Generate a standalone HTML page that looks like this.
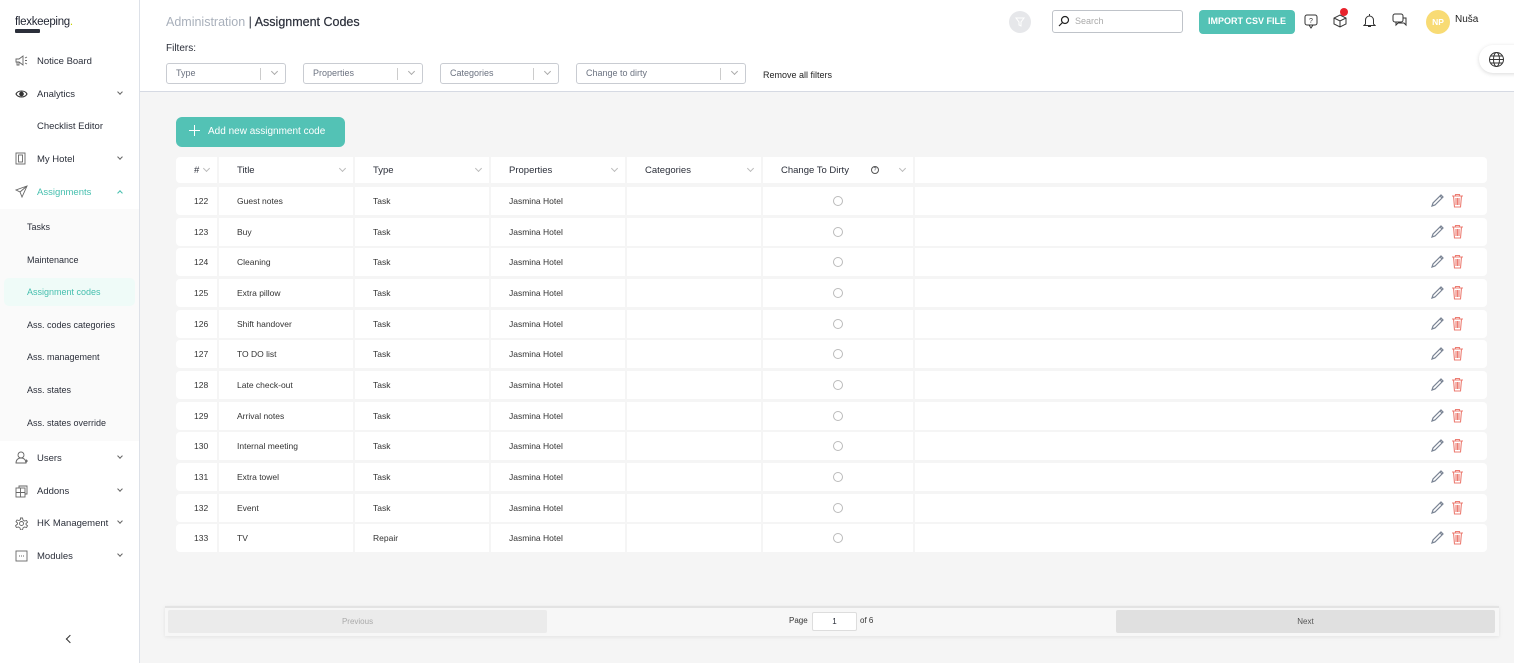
<!DOCTYPE html>
<html><head><meta charset="utf-8"><style>
*{box-sizing:border-box;margin:0;padding:0}
body{width:1514px;height:663px;overflow:hidden;font-family:"Liberation Sans",sans-serif;background:#f5f5f5;position:relative;color:#2b2f3a}
.a{position:absolute}
#side{left:0;top:0;width:140px;height:663px;background:#fff;border-right:1px solid #dde1e8}
.si{position:absolute;left:37px;font-size:9.5px;color:#2b2f3a}
.sub{position:absolute;left:27px;font-size:9px;color:#2b2f3a}
.chev{position:absolute;left:118px;width:4px;height:4px;border-right:1px solid #666;border-bottom:1px solid #666;transform:rotate(45deg)}
.ic{position:absolute;left:15px}
#hdr{left:140px;top:0;width:1374px;height:92px;background:#fff;border-bottom:1px solid #d6dae3}
.sel{position:absolute;top:63px;height:21px;border:1px solid #c9ccd2;border-radius:3px;background:#fff;font-size:9px;color:#6b7280;padding:4px 9px}
.sel:after{content:"";position:absolute;right:24px;top:4px;width:1px;height:12px;background:#ccc}
.sel i{position:absolute;right:8px;top:5px;width:5px;height:5px;border-right:1px solid #aaa;border-bottom:1px solid #aaa;transform:rotate(45deg)}
.row{position:absolute;left:176px;width:1311px;height:28px}
.c{position:absolute;top:0;height:100%;background:#fff;font-size:8.5px;color:#333;display:flex;align-items:center}
.h .c{font-size:9.5px;color:#2b2f3a;border-radius:0}
.hc:after{content:"";position:absolute;right:8px;top:9px;width:4px;height:4px;border-right:1px solid #bbb;border-bottom:1px solid #bbb;transform:rotate(45deg)}
.rad{width:10px;height:10px;border:1px solid #bbb;border-radius:50%;margin-left:70px}
</style></head><body>
<div id="side" class="a">
<div class="a" style="left:15px;top:16px;font-size:11.5px;letter-spacing:-0.3px;color:#1f2330">flexkeeping<span style="color:#c8d400">.</span></div>
<div class="a" style="left:15px;top:29px;width:25px;height:4px;background:#2b2f3a;border-radius:1px"></div>
<svg class="ic" style="top:55px" width="13" height="12" viewBox="0 0 13 12" fill="none" stroke="#666" stroke-width="0.9"><path d="M1 4h3l4-3v9L4 7H1zM2 7v3h2V7M10 3l2-1M10 5.5h2M10 8l2 1"/></svg>
<div class="si" style="top:56px">Notice Board</div>
<svg class="ic" style="top:89px" width="13" height="10" viewBox="0 0 13 10" fill="none" stroke="#333" stroke-width="1.1"><path d="M1 5C3 1 10 1 12 5C10 9 3 9 1 5z"/><circle cx="6.5" cy="5" r="1.8" fill="#333"/></svg>
<div class="si" style="top:89px">Analytics</div><div class="chev" style="top:90px"></div>
<div class="si" style="top:121px">Checklist Editor</div>
<svg class="ic" style="top:152px" width="11" height="13" viewBox="0 0 11 13" fill="none" stroke="#666" stroke-width="0.9"><rect x="1" y="1" width="9" height="11"/><rect x="3.5" y="3" width="4" height="7"/></svg>
<div class="si" style="top:154px">My Hotel</div><div class="chev" style="top:155px"></div>
<svg class="ic" style="top:185px" width="13" height="13" viewBox="0 0 13 13" fill="none" stroke="#666" stroke-width="0.9"><path d="M12 1L1 5l4 2 2 5zM5 7l7-6"/></svg>
<div class="si" style="top:187px;color:#45bfae">Assignments</div><div class="chev" style="top:191px;border-color:#45bfae;transform:rotate(-135deg)"></div>
<div class="a" style="left:0;top:209px;width:139px;height:232px;background:#fafafa"></div>
<div class="a" style="left:4px;top:278px;width:131px;height:28px;background:#effbf8;border-radius:5px"></div>
<div class="sub" style="top:222px">Tasks</div>
<div class="sub" style="top:255px">Maintenance</div>
<div class="sub" style="top:287px;color:#45bfae">Assignment codes</div>
<div class="sub" style="top:320px">Ass. codes categories</div>
<div class="sub" style="top:352px">Ass. management</div>
<div class="sub" style="top:385px">Ass. states</div>
<div class="sub" style="top:418px">Ass. states override</div>
<svg class="ic" style="top:451px" width="13" height="13" viewBox="0 0 13 13" fill="none" stroke="#666" stroke-width="0.9"><circle cx="6" cy="4" r="3"/><path d="M1 12c0-3 2-5 5-5s5 2 5 5zM10 10h3M11.5 8.5v3"/></svg>
<div class="si" style="top:453px">Users</div><div class="chev" style="top:454px"></div>
<svg class="ic" style="top:485px" width="13" height="13" viewBox="0 0 13 13" fill="none" stroke="#666" stroke-width="0.9"><rect x="1" y="3" width="9" height="9"/><path d="M5.5 3v9M1 7.5h9M4 3V1h8v8h-2"/></svg>
<div class="si" style="top:486px">Addons</div><div class="chev" style="top:487px"></div>
<svg class="ic" style="top:517px" width="13" height="13" viewBox="0 0 13 13" fill="none" stroke="#666" stroke-width="0.9"><circle cx="6.5" cy="6.5" r="2"/><path d="M5.5 1h2l.5 2 1.5 1 2-.5 1 1.7-1.5 1.3v1l1.5 1.3-1 1.7-2-.5-1.5 1-.5 2h-2l-.5-2-1.5-1-2 .5-1-1.7L2.5 7V6L1 4.7l1-1.7 2 .5 1.5-1z"/></svg>
<div class="si" style="top:518px">HK Management</div><div class="chev" style="top:519px"></div>
<svg class="ic" style="top:550px" width="13" height="12" viewBox="0 0 13 12" fill="none" stroke="#666" stroke-width="0.9"><rect x="1" y="1" width="11" height="10"/><path d="M4 6h1M6 6h1M8 6h1"/></svg>
<div class="si" style="top:551px">Modules</div><div class="chev" style="top:552px"></div>
<div class="a" style="left:67px;top:636px;width:6px;height:6px;border-left:1.5px solid #333;border-bottom:1.5px solid #333;transform:rotate(45deg)"></div>
</div>

<div id="hdr" class="a">
<div class="a" style="left:26px;top:15px;font-size:12.5px;color:#2b2f3a"><span style="color:#a9b0bb">Administration</span> | <span style="-webkit-text-stroke:0.2px #2b2f3a">Assignment Codes</span></div>
<div class="a" style="left:26px;top:43px;font-size:10px;color:#2b2f3a">Filters:</div>
<div class="sel" style="left:26px;width:120px">Type<i></i></div>
<div class="sel" style="left:163px;width:120px">Properties<i></i></div>
<div class="sel" style="left:300px;width:119px">Categories<i></i></div>
<div class="sel" style="left:436px;width:170px">Change to dirty<i></i></div>
<div class="a" style="left:623px;top:70px;font-size:9px;color:#222">Remove all filters</div>
<div class="a" style="left:869px;top:11px;width:22px;height:22px;border-radius:50%;background:#e6e7ea"></div>
<svg class="a" style="left:875px;top:17px" width="10" height="10" viewBox="0 0 10 10" fill="none" stroke="#fff"><path d="M1 1h8L6 5v4L4 8V5z"/></svg>
<div class="a" style="left:912px;top:10px;width:131px;height:23px;border:1px solid #bfc3c9;border-radius:3px;font-size:9px;color:#aaa;padding:5px 0 0 22px">Search</div>
<svg class="a" style="left:918px;top:15px" width="12" height="12" viewBox="0 0 12 12" fill="none" stroke="#222" stroke-width="1.2"><circle cx="7" cy="5" r="3.5"/><path d="M4.5 7.5L1 11"/></svg>
<div class="a" style="left:1059px;top:10px;width:96px;height:24px;background:#53c2b5;border-radius:4px;color:#fff;font-size:9px;font-weight:bold;text-align:center;line-height:22px">IMPORT CSV FILE</div>
<svg class="a" style="left:1164px;top:14px" width="14" height="15" viewBox="0 0 14 15" fill="none" stroke="#333"><rect x="1" y="1" width="12" height="10" rx="2"/><path d="M5 11l2 3 2-3"/><text x="7" y="9" font-size="7" text-anchor="middle" fill="#333" stroke="none" font-family="Liberation Sans">?</text></svg>
<svg class="a" style="left:1193px;top:13px" width="14" height="15" viewBox="0 0 14 15" fill="none" stroke="#333"><path d="M7 2l6 3v6l-6 3-6-3V5zM1 5l6 3 6-3M7 8v6"/></svg>
<div class="a" style="left:1200px;top:8px;width:8px;height:8px;background:#e8232c;border-radius:50%"></div>
<svg class="a" style="left:1223px;top:13px" width="13" height="15" viewBox="0 0 13 15" fill="none" stroke="#333"><path d="M6.5 1v1.5M2.5 11V7a4 4 0 0 1 8 0v4l1.5 1.5H1zM5 13.5h3"/></svg>
<svg class="a" style="left:1252px;top:13px" width="15" height="14" viewBox="0 0 15 14" fill="none" stroke="#333"><rect x="1" y="1" width="10" height="8" rx="2"/><path d="M4 9v3l2-2M6 10h6l2 2V5h-3"/></svg>
<div class="a" style="left:1286px;top:10px;width:24px;height:24px;border-radius:50%;background:#f8db74;color:#fff;font-size:8.5px;font-weight:bold;text-align:center;line-height:24px">NP</div>
<div class="a" style="left:1315px;top:14px;font-size:10px;color:#222">Nuša</div>
<div class="a" style="left:1339px;top:45px;width:40px;height:28px;background:#fff;border-radius:14px 0 0 14px;box-shadow:0 1px 4px rgba(0,0,0,.15)"></div>
<svg class="a" style="left:1348px;top:51px" width="17" height="17" viewBox="0 0 17 17" fill="none" stroke="#333"><circle cx="8.5" cy="8.5" r="7"/><ellipse cx="8.5" cy="8.5" rx="3" ry="7"/><path d="M1.5 8.5h14M2.5 5h12M2.5 12h12"/></svg>
</div>

<div class="a" style="left:176px;top:117px;width:169px;height:30px;background:#53c2b5;border-radius:6px;color:#fff;font-size:10px;line-height:29px;padding-left:32px">Add new assignment code</div>
<div class="a" style="left:189px;top:125px;width:11px;height:11px"><div class="a" style="left:5px;top:0;width:1.4px;height:11px;background:#fff"></div><div class="a" style="left:0;top:5px;width:11px;height:1.4px;background:#fff"></div></div>

<div class="row h" style="top:157px;height:26px">
<div class="c hc" style="left:0;width:41px;padding-left:18px;border-radius:4px 0 0 4px">#</div>
<div class="c hc" style="left:43px;width:134px;padding-left:18px">Title</div>
<div class="c hc" style="left:179px;width:134px;padding-left:18px">Type</div>
<div class="c hc" style="left:315px;width:134px;padding-left:18px">Properties</div>
<div class="c hc" style="left:451px;width:134px;padding-left:18px">Categories</div>
<div class="c hc" style="left:587px;width:150px;padding-left:18px">Change To Dirty<span style="margin-left:22px;width:8px;height:8px;border:1px solid #555;border-radius:50%;font-size:5px;text-align:center;line-height:6px">?</span></div>
<div class="c" style="left:739px;width:572px;border-radius:0 4px 4px 0"></div>
</div>

<div id="rows"></div>
<script>
var d=[["122","Guest notes","Task"],["123","Buy","Task"],["124","Cleaning","Task"],["125","Extra pillow","Task"],["126","Shift handover","Task"],["127","TO DO list","Task"],["128","Late check-out","Task"],["129","Arrival notes","Task"],["130","Internal meeting","Task"],["131","Extra towel","Task"],["132","Event","Task"],["133","TV","Repair"]];
var h="";d.forEach(function(r,i){var t=187+i*30.65;
h+='<div class="row" style="top:'+t+'px"><div class="c" style="left:0;width:41px;padding-left:18px;border-radius:4px 0 0 4px">'+r[0]+'</div><div class="c" style="left:43px;width:134px;padding-left:18px">'+r[1]+'</div><div class="c" style="left:179px;width:134px;padding-left:18px">'+r[2]+'</div><div class="c" style="left:315px;width:134px;padding-left:18px">Jasmina Hotel</div><div class="c" style="left:451px;width:134px"></div><div class="c" style="left:587px;width:150px"><div class="rad"></div></div><div class="c" style="left:739px;width:572px;border-radius:0 4px 4px 0"><svg style="position:absolute;left:515px;top:7px" width="14" height="14" viewBox="0 0 14 14" fill="none" stroke="#7a8494" stroke-width="1.2"><path d="M2 12l1-3 8-8 2 2-8 8zM10 2l2 2"/></svg><svg style="position:absolute;left:536px;top:6px" width="13" height="15" viewBox="0 0 13 15" fill="none" stroke="#ec7d73" stroke-width="1.1"><path d="M1 3h11M4.5 3V1.5h4V3M2.5 3l1 11h6l1-11M5 5v7M6.5 5v7M8 5v7"/></svg></div></div>';});
document.getElementById("rows").innerHTML=h;
</script>

<div class="a" style="left:165px;top:606px;width:1334px;height:30px;background:#f7f7f7;border-top:2px solid #e3e3e3;box-shadow:0 1px 4px rgba(0,0,0,.08)"></div>
<div class="a" style="left:168px;top:610px;width:379px;height:23px;background:#ebebeb;border-radius:2px;font-size:8px;color:#aaa;text-align:center;line-height:23px">Previous</div>
<div class="a" style="left:1116px;top:610px;width:379px;height:23px;background:#e0e0e0;border-radius:2px;font-size:8px;color:#555;text-align:center;line-height:23px">Next</div>
<div class="a" style="left:789px;top:616px;font-size:8px;color:#333">Page</div>
<div class="a" style="left:812px;top:612px;width:45px;height:19px;background:#fff;border:1px solid #ddd;border-radius:2px;font-size:8px;text-align:center;line-height:17px">1</div>
<div class="a" style="left:860px;top:616px;font-size:8px;color:#333">of 6</div>
</body></html>
